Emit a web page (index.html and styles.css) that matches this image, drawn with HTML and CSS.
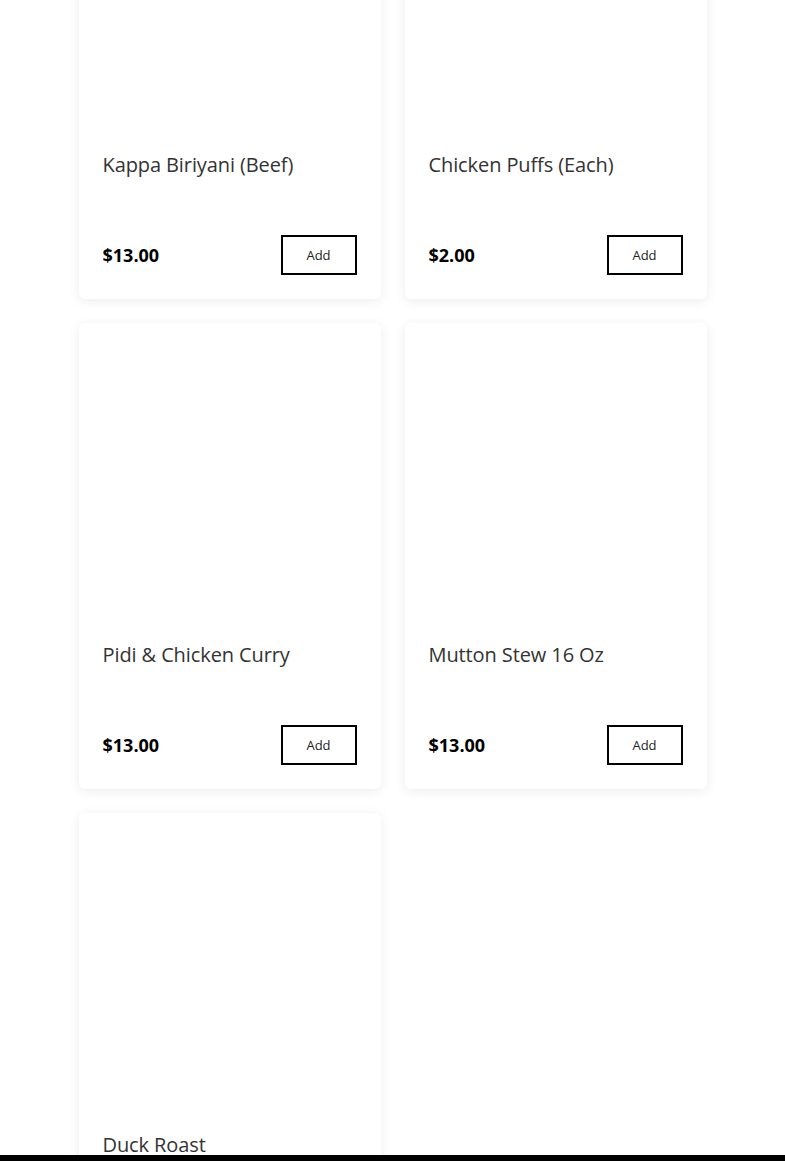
FILE: index.html
```html
<!DOCTYPE html>
<html lang="en">
<head>
<meta charset="utf-8">
<title>Menu</title>
<link rel="stylesheet" href="styles.css">
</head>
<body>
<main class="menu">
  <div class="grid">
    <article class="card">
      <div class="card-img"></div>
      <div class="card-body">
        <h3 class="title">Kappa Biriyani (Beef)</h3>
        <div class="foot"><span class="price">$13.00</span><button class="add">Add</button></div>
      </div>
    </article>
    <article class="card">
      <div class="card-img"></div>
      <div class="card-body">
        <h3 class="title">Chicken Puffs (Each)</h3>
        <div class="foot"><span class="price">$2.00</span><button class="add">Add</button></div>
      </div>
    </article>
    <article class="card">
      <div class="card-img"></div>
      <div class="card-body">
        <h3 class="title">Pidi &amp; Chicken Curry</h3>
        <div class="foot"><span class="price">$13.00</span><button class="add">Add</button></div>
      </div>
    </article>
    <article class="card">
      <div class="card-img"></div>
      <div class="card-body">
        <h3 class="title">Mutton Stew 16 Oz</h3>
        <div class="foot"><span class="price">$13.00</span><button class="add">Add</button></div>
      </div>
    </article>
    <article class="card">
      <div class="card-img"></div>
      <div class="card-body">
        <h3 class="title">Duck Roast</h3>
        <div class="foot"><span class="price">$13.00</span><button class="add">Add</button></div>
      </div>
    </article>
  </div>
</main>
<div class="bottom-bar"></div>
</body>
</html>
```
FILE: styles.css
```css
html, body {
  margin: 0;
  padding: 0;
  background: #fff;
  font-family: "Open Sans", "Noto Sans", sans-serif;
  overflow: hidden;
}
.menu {
  display: flex;
  justify-content: center;
  margin-top: -167px;
}
.grid {
  display: grid;
  grid-template-columns: 302px 302px;
  column-gap: 24px;
  row-gap: 24px;
}
.card {
  background: #fff;
  border-radius: 6px;
  box-shadow: 0 2px 12px rgba(0, 0, 0, 0.08);
  display: flex;
  flex-direction: column;
  height: 466px;
}
.card-img {
  height: 293px;
}
.card-body {
  padding: 24px 24px 24px;
  display: flex;
  flex-direction: column;
  flex: 1;
}
.title {
  margin: 0;
  font-size: 20px;
  font-weight: 400;
  line-height: 30px;
  color: #333;
  flex: 1;
  letter-spacing: -0.1px;
}
.foot {
  display: flex;
  justify-content: space-between;
  align-items: center;
}
.price {
  font-size: 18px;
  font-weight: 700;
  color: #000;
}
.add {
  width: 76px;
  height: 40px;
  border: 2px solid #000;
  background: #fff;
  font-family: "Open Sans", sans-serif;
  font-size: 13px;
  color: #222;
  border-radius: 0;
  padding: 0;
  margin: 0;
}
.bottom-bar {
  position: fixed;
  left: 0;
  right: 0;
  bottom: 0;
  height: 6px;
  background: #000;
}
```
